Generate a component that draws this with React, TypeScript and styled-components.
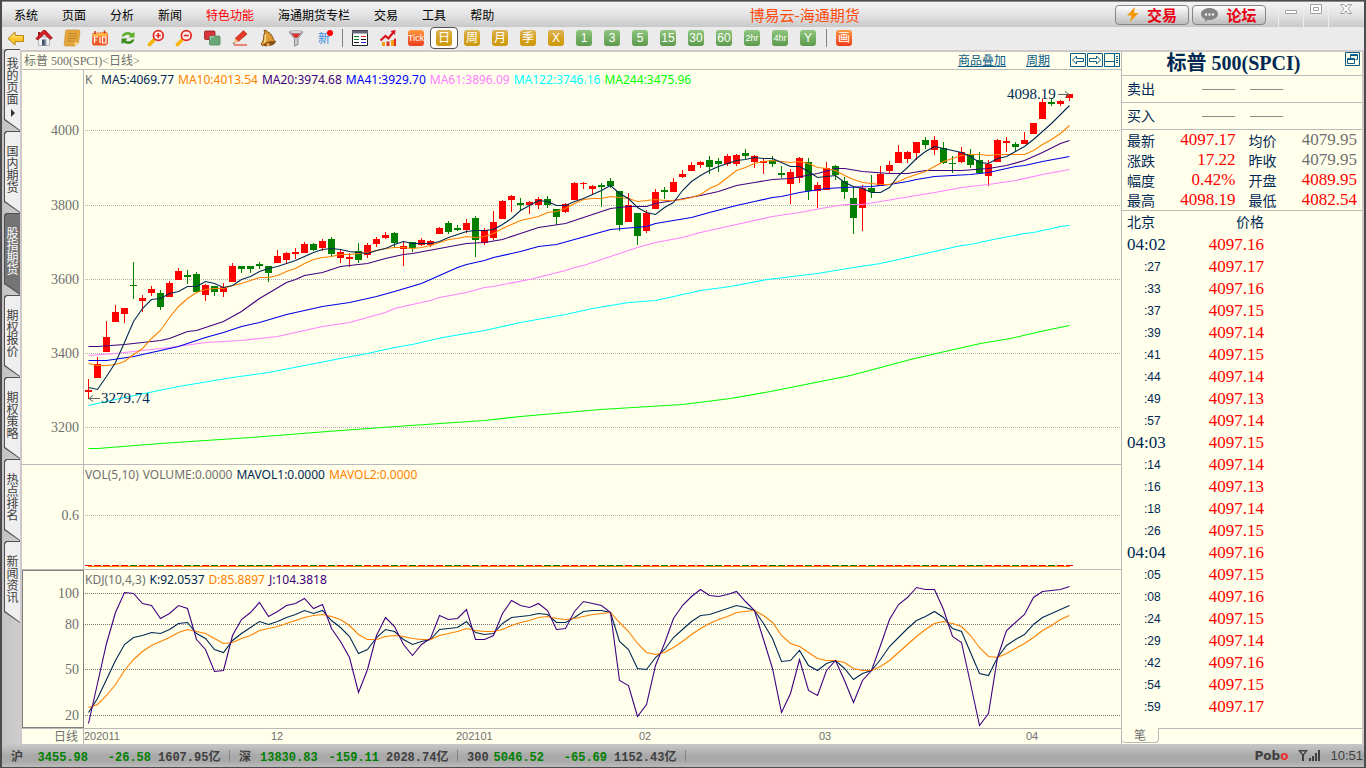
import React from "react";
import styled, { createGlobalStyle } from "styled-components";

const CJK = '"Noto Sans CJK SC"';
const SERIF = `"Liberation Serif", ${CJK}, serif`;
const SANS = `"Liberation Sans", ${CJK}, sans-serif`;
const UI = `${CJK}, sans-serif`;
const MONO = `"Liberation Mono", ${CJK}, monospace`;
const LEGEND = `"Noto Sans", ${CJK}, sans-serif`;

const C = {
  paper: "#ffffeb",
  line: "#b9b9b9",
  edge: "#cfc8c8",
  navy: "#002855",
  grey: "#707070",
  red: "#ff0000",
  green: "#008000",
  orange: "#ff8000",
  purple: "#400080",
};

const Global = createGlobalStyle`
  *, *::before, *::after { box-sizing: border-box; }
  body { margin: 0; background: #ebebeb; font-family: ${UI}; font-size: 12px; }
  button { font: inherit; color: inherit; border: 0; padding: 0; background: none; cursor: pointer; }
  a { color: inherit; text-decoration: none; }
  svg { display: block; }
  dl, dd, h1, h2, ul { margin: 0; padding: 0; }
`;

/* ---------- frame ---------- */

const Frame = styled.div`
  min-height: 100vh;
  display: flex;
  flex-direction: column;
  border: 1px solid #4c4a4c;
  border-width: 1px 2px;
  background: #ebebeb;
`;

const MenuBar = styled.header`
  height: 26px;
  display: flex;
  align-items: center;
  padding-right: 2px;
  border-top: 1px solid #8a8a8a;
  background: linear-gradient(#f3f3f3, #e6e6e6 45%, #c9c9c9);
  white-space: nowrap;
`;

const Menu = styled.nav`
  display: flex;
  gap: 24px;
  padding-left: 12px;
`;

const MenuItem = styled.button<{ $hot?: boolean }>`
  line-height: 24px;
  color: ${(p) => (p.$hot ? C.red : "#000")};
`;

const AppTitle = styled.h1`
  flex: 1;
  text-align: center;
  font-size: 15px;
  line-height: 24px;
  font-weight: 400;
  color: #ff4a0a;
`;

const MenuRight = styled.div`
  align-self: stretch;
  display: flex;
  align-items: center;
  gap: 3px;
`;

const PillButton = styled.button`
  width: 74px;
  height: 20px;
  display: flex;
  align-items: center;
  justify-content: center;
  gap: 8px;
  border: 1px solid #858585;
  border-radius: 4px;
  background: linear-gradient(#ffffff, #dedede 50%, #bdbdbd);
  color: #e60012;
  font-size: 15px;
  font-weight: 700;
  line-height: 18px;
`;

const WindowButtons = styled.div`
  display: flex;
  align-self: stretch;
  margin-left: 9px;
`;

const WindowButton = styled.button<{ $wide?: boolean }>`
  width: ${(p) => (p.$wide ? "34px" : "25px")};
  display: flex;
  justify-content: center;
  border-left: 1px solid #ededed;
`;

const Toolbar = styled.div`
  height: 23px;
  display: flex;
  align-items: flex-start;
`;

const Tool = styled.button<{ $active?: boolean }>`
  width: 28px;
  height: 22px;
  display: flex;
  align-items: center;
  justify-content: center;
  border: ${(p) => (p.$active ? "1px solid #505050" : "0")};
  border-radius: 4px;
  background: ${(p) => (p.$active ? "#fff" : "none")};
`;

const ToolDivider = styled.span`
  width: 8px;
  height: 22px;
  padding: 2px 0;
  display: flex;
  justify-content: center;
  &::before {
    content: "";
    width: 1px;
    background: #808080;
  }
`;

type Tone = "gold" | "green" | "red";
const tones: Record<Tone, string> = {
  gold: "linear-gradient(#dcb458, #d4a017 60%, #cb9a10)",
  green: "linear-gradient(#8fc57e, #5c9a4c)",
  red: "linear-gradient(#ff9a3c, #ee3a1c)",
};

const Badge = styled.span<{ $tone: Tone; $small?: boolean }>`
  width: 16px;
  height: 16px;
  border-radius: 3px;
  background: ${(p) => tones[p.$tone]};
  color: #fff;
  font-family: ${SANS};
  font-size: ${(p) => (p.$small ? "9px" : "12px")};
  line-height: 16px;
  text-align: center;
  white-space: nowrap;
`;

const NewBadge = styled.span`
  position: relative;
  color: #3c8cdc;
  font-size: 12px;
  line-height: 16px;
  &::after {
    content: "";
    position: absolute;
    top: 0;
    right: -3px;
    width: 6px;
    height: 6px;
    border-radius: 50%;
    background: ${C.red};
  }
`;

const Body = styled.div`
  flex: 1;
  display: flex;
`;

/* ---------- left rail ---------- */

const Rail = styled.nav`
  width: 18px;
  padding-left: 2px;
  margin-top: -1px;
  background: linear-gradient(90deg, #c2c2c4, #cecece);
`;

const RailTab = styled.button<{ $active?: boolean }>`
  position: relative;
  width: 16px;
  height: 82px;
  display: flex;
  flex-direction: column;
  align-items: center;
  justify-content: center;
  gap: 4px;
  padding-bottom: 6px;
  isolation: isolate;
  color: ${(p) => (p.$active ? "#fff" : "#404040")};
  &::before,
  &::after {
    content: "";
    position: absolute;
    z-index: -1;
  }
  &::before {
    inset: 0;
    background: #505050;
    clip-path: polygon(2px 0, 100% 0, 100% 100%, 0 71px, 0 2px);
  }
  &::after {
    inset: 1px 0 1px 1px;
    background: ${(p) => (p.$active ? "#747474" : "#efefef")};
    clip-path: polygon(2px 0, 100% 0, 100% 100%, 0 69px, 0 2px);
  }
`;

const RailText = styled.span`
  writing-mode: vertical-rl;
  text-orientation: upright;
  font-size: 12px;
  line-height: 14px;
`;

/* ---------- chart column ---------- */

const Workspace = styled.main`
  flex: 1;
  min-width: 0;
  display: flex;
  border: 2px solid ${C.edge};
  border-bottom: 0;
  background: ${C.paper};
`;

const Charts = styled.section`
  flex: 1;
  min-width: 0;
  display: flex;
  flex-direction: column;
`;

const ChartHeader = styled.div`
  height: 18px;
  display: flex;
  align-items: center;
  padding: 0 1px 0 2px;
  border-bottom: 1px solid ${C.line};
  font-family: ${SERIF};
  line-height: 16px;
  white-space: nowrap;
`;

const Instrument = styled.span`
  flex: 1;
  color: ${C.grey};
`;

const HeaderLink = styled.a`
  margin-right: 20px;
  color: #0c5c88;
  text-decoration: underline;
`;

const IconStrip = styled.div`
  display: flex;
  gap: 1px;
  color: #0c5c88;
`;

const IconButton = styled.button`
  width: 16px;
  height: 15px;
  color: #0c5c88;
`;

const Pane = styled.div<{ $height: number; $grow?: boolean }>`
  flex: ${(p) => (p.$grow ? 1 : 0)} 0 ${(p) => p.$height}px;
  display: flex;
  border-bottom: ${(p) => (p.$height > 20 ? `1px solid ${C.line}` : "0")};
`;

const Axis = styled.div<{ $boxed?: boolean }>`
  width: 62px;
  border-right: 1px solid ${C.line};
  outline: ${(p) => (p.$boxed ? "1px solid #808080" : "none")};
  outline-offset: -1px;
  text {
    font-family: ${SERIF};
    font-size: 14px;
    fill: ${C.grey};
    text-anchor: end;
  }
`;

const Plot = styled.div`
  position: relative;
  flex: 1;
  min-width: 0;
`;

const Legend = styled.div`
  position: absolute;
  top: 2px;
  left: 1px;
  display: flex;
  gap: 4px;
  font-family: ${LEGEND};
  font-size: 12px;
  line-height: 16px;
  white-space: nowrap;
`;

const LegendItem = styled.span<{ $color: string; $lead?: boolean }>`
  color: ${(p) => p.$color};
  min-width: ${(p) => (p.$lead ? "12px" : "0")};
`;

const PeriodLabel = styled.div`
  width: 62px;
  padding-right: 5px;
  border-right: 1px solid ${C.line};
  color: ${C.grey};
  text-align: right;
  line-height: 14px;
`;

/* ---------- quote panel ---------- */

const Quote = styled.aside`
  flex: 0 0 241px;
  display: flex;
  flex-direction: column;
  border-left: 1px solid ${C.line};
  color: ${C.navy};
`;

const QuoteTitle = styled.div`
  height: 24px;
  display: flex;
  border-bottom: 1px solid ${C.line};
  padding-right: 1px;
`;

const QuoteName = styled.h2`
  flex: 1;
  font-family: ${SERIF};
  font-size: 20px;
  line-height: 22px;
  font-weight: 700;
  text-align: center;
  white-space: pre;
`;

const OrderRow = styled.div`
  height: 27px;
  display: flex;
  align-items: center;
  padding: 0 0 2px 5px;
  border-bottom: 1px solid ${C.line};
  font-size: 14px;
  line-height: 20px;
`;

const Dashes = styled.span<{ $first?: boolean }>`
  margin-left: ${(p) => (p.$first ? "47px" : "15px")};
  font-family: ${SANS};
  font-size: 11px;
  color: ${C.grey};
`;

const Stats = styled.dl`
  display: grid;
  grid-template-columns: 28px 1fr 41px 1fr;
  grid-auto-rows: 20px;
  padding: 0 5px;
  border-bottom: 1px solid ${C.line};
  line-height: 20px;
`;

const StatName = styled.dt`
  font-size: 14px;
  text-align: right;
`;

const StatValue = styled.dd<{ $flat?: boolean }>`
  font-family: ${SERIF};
  font-size: 17px;
  text-align: right;
  color: ${(p) => (p.$flat ? C.grey : C.red)};
`;

const Ticks = styled.table`
  width: 142px;
  border-collapse: collapse;
  table-layout: fixed;
`;

const TickHead = styled.th<{ $right?: boolean }>`
  height: 23px;
  padding: 0 0 0 ${(p) => (p.$right ? "0" : "5px")};
  font-size: 14px;
  line-height: 20px;
  font-weight: 400;
  vertical-align: top;
  text-align: ${(p) => (p.$right ? "right" : "left")};
`;

const TickTime = styled.td<{ $minor?: boolean }>`
  height: 22px;
  padding: 0 0 0 ${(p) => (p.$minor ? "22px" : "5px")};
  font-family: ${(p) => (p.$minor ? SANS : SERIF)};
  font-size: ${(p) => (p.$minor ? "12px" : "17px")};
  line-height: 20px;
`;

const TickPrice = styled.td`
  padding: 0;
  font-family: ${SERIF};
  font-size: 17px;
  line-height: 20px;
  text-align: right;
  color: ${C.red};
`;

const QuoteFoot = styled.div`
  display: flex;
  height: 16px;
  margin-top: auto;
`;

const FootTab = styled.button`
  width: 37px;
  height: 15px;
  border: 1px solid ${C.line};
  border-top: 0;
  border-left: 0;
  border-radius: 0 0 4px 4px;
  color: ${C.grey};
  line-height: 14px;
`;

const FootRest = styled.div`
  flex: 1;
  border-top: 1px solid ${C.line};
`;

/* ---------- status bar ---------- */

const Status = styled.footer`
  height: 23px;
  display: flex;
  align-items: center;
  padding: 0 1px 0 9px;
  background: linear-gradient(#c8c8c8, #a9a9a9 50%, #a9a9a9 75%, #bcbcbc);
  font-family: ${MONO};
  font-size: 12px;
  font-weight: 700;
  color: #404040;
  white-space: nowrap;
`;

const IndexGroup = styled.div`
  width: 228px;
  display: flex;
  align-items: baseline;
`;

const IndexName = styled.span`
  width: 21px;
`;

const IndexValue = styled.span<{ $width: number }>`
  width: ${(p) => p.$width}px;
  text-align: right;
  color: ${C.green};
`;

const Turnover = styled.span`
  width: 78px;
  padding-left: 7px;
`;

const StatusDivider = styled.span`
  align-self: center;
  width: 1px;
  height: 11px;
  background: #808080;
`;

const StatusRight = styled.div`
  margin-left: auto;
  display: flex;
  align-items: center;
  gap: 10px;
  font-family: ${SANS};
  font-size: 13px;
  font-weight: 400;
`;

const Brand = styled.span`
  font-family: "DejaVu Sans", sans-serif;
  font-size: 12px;
  font-weight: 700;
  em {
    font-style: normal;
    color: #f03030;
  }
`;

/* ---------- data ---------- */

type Candle = ["r" | "g", number, number, number, number];

/* direction, high, body top, body bottom, low */
const candles: Candle[] = [
  ["r", 379, 390, 392, 399], ["r", 357, 364, 378, 378], ["r", 321, 337, 352, 352], ["r", 305, 312, 322, 322],
  ["r", 308, 308, 314, 323], ["g", 262, 285, 286, 299], ["r", 295, 298, 301, 312], ["r", 286, 289, 293, 296],
  ["g", 290, 293, 307, 310], ["r", 281, 283, 297, 297], ["r", 268, 271, 280, 280], ["g", 270, 275, 277, 284],
  ["g", 272, 274, 292, 292], ["r", 284, 285, 295, 301], ["g", 286, 286, 292, 296], ["r", 283, 287, 292, 297],
  ["r", 263, 266, 282, 282], ["g", 266, 266, 269, 273], ["g", 266, 266, 269, 273], ["g", 262, 264, 266, 269],
  ["g", 266, 266, 273, 282], ["r", 250, 256, 263, 263], ["r", 252, 253, 260, 264], ["r", 248, 252, 254, 259],
  ["r", 242, 244, 253, 253], ["g", 243, 244, 250, 251], ["r", 239, 241, 248, 251], ["g", 237, 239, 254, 257],
  ["r", 250, 252, 258, 263], ["r", 253, 257, 259, 267], ["g", 243, 251, 260, 263], ["r", 243, 245, 255, 258],
  ["r", 237, 239, 244, 247], ["r", 232, 235, 238, 239], ["g", 232, 233, 243, 247], ["r", 242, 246, 249, 266],
  ["g", 242, 242, 248, 252], ["r", 238, 240, 245, 246], ["r", 240, 241, 245, 247], ["r", 227, 228, 234, 234],
  ["g", 221, 223, 232, 234], ["g", 225, 228, 230, 231], ["r", 219, 223, 230, 233], ["g", 216, 218, 240, 257],
  ["r", 228, 230, 243, 245], ["r", 211, 222, 238, 240], ["r", 200, 201, 219, 219], ["r", 195, 196, 200, 212],
  ["g", 198, 203, 205, 211], ["r", 201, 202, 205, 214], ["r", 197, 199, 205, 209], ["g", 196, 199, 205, 208],
  ["g", 209, 209, 217, 225], ["r", 203, 204, 212, 213], ["r", 182, 183, 200, 200], ["r", 182, 183, 184, 189],
  ["r", 185, 186, 189, 195], ["g", 183, 185, 187, 207], ["g", 178, 181, 186, 188], ["g", 191, 191, 225, 231],
  ["r", 193, 205, 222, 222], ["g", 213, 213, 236, 245], ["r", 210, 213, 231, 233], ["r", 189, 192, 209, 209],
  ["g", 187, 190, 192, 199], ["r", 178, 182, 192, 192], ["r", 170, 174, 177, 178], ["r", 162, 165, 171, 171],
  ["r", 161, 162, 165, 168], ["g", 156, 160, 167, 174], ["g", 158, 161, 164, 172], ["r", 154, 156, 164, 166],
  ["r", 154, 155, 164, 166], ["g", 149, 153, 156, 160], ["r", 155, 156, 162, 168], ["r", 159, 161, 163, 174],
  ["g", 156, 160, 164, 167], ["g", 166, 173, 175, 178], ["r", 169, 172, 184, 204], ["r", 157, 158, 178, 183],
  ["g", 158, 162, 191, 200], ["r", 182, 185, 191, 208], ["r", 162, 168, 190, 190], ["g", 165, 166, 175, 180],
  ["g", 177, 181, 192, 199], ["g", 187, 198, 218, 234], ["r", 185, 188, 208, 231], ["g", 175, 188, 192, 198],
  ["r", 166, 174, 186, 186], ["r", 161, 165, 171, 173], ["r", 145, 152, 163, 163], ["r", 151, 152, 159, 163],
  ["r", 142, 142, 153, 160], ["g", 137, 140, 145, 149], ["r", 136, 140, 150, 155], ["g", 142, 148, 163, 164],
  ["g", 156, 163, 164, 173], ["r", 147, 152, 162, 163], ["g", 149, 154, 165, 168], ["g", 152, 160, 173, 174],
  ["r", 160, 164, 176, 186], ["r", 139, 140, 162, 162], ["r", 137, 141, 143, 152], ["g", 142, 144, 147, 152],
  ["r", 132, 140, 144, 144], ["r", 123, 123, 134, 134], ["r", 99, 102, 119, 119], ["g", 98, 102, 104, 106],
  ["r", 100, 101, 104, 106], ["r", 94, 94, 98, 101],
];

const ma5 = [
  387, 389, 376, 362, 342, 321, 308, 299, 298, 293, 291, 286, 286, 281, 283, 287, 285, 279, 276, 271, 268, 266, 263,
  260, 256, 252, 249, 248, 249, 251, 252, 253, 250, 248, 244, 241, 243, 243, 243, 241, 237, 234, 231, 230, 230, 229,
  224, 218, 210, 205, 200, 201, 205, 205, 201, 198, 194, 190, 185, 193, 198, 207, 212, 214, 207, 202, 190, 181, 175,
  170, 166, 163, 160, 159, 157, 158, 158, 162, 166, 166, 171, 177, 176, 175, 182, 186, 188, 192, 192, 187, 175, 167,
  158, 151, 146, 148, 150, 152, 156, 162, 163, 158, 156, 151, 146, 139, 131, 123, 114, 105,
];

const ma10 = [
  363, 365, 365, 364, 361, 354, 348, 338, 330, 317, 306, 298, 292, 289, 288, 288, 285, 283, 280, 277, 277, 275, 271,
  268, 263, 259, 257, 256, 254, 254, 253, 252, 250, 248, 247, 247, 248, 247, 245, 242, 239, 238, 236, 237, 236, 233,
  228, 224, 220, 218, 216, 212, 211, 208, 203, 199, 198, 198, 196, 197, 198, 201, 200, 199, 200, 200, 199, 197, 194,
  188, 184, 177, 170, 167, 163, 161, 160, 161, 162, 161, 163, 167, 168, 170, 175, 179, 182, 183, 184, 184, 181, 177,
  174, 171, 166, 161, 158, 155, 154, 154, 155, 154, 154, 154, 154, 150, 144, 139, 133, 125,
];

const ma20 =
  "88,346 97,346 124,344 142,342 160,340 169,338 187,331 196,330 214,324 223,321 241,311 259,298 286,282 295,279 304,275 322,272 340,266 367,263 385,258 394,256 403,254 412,253 439,248 466,243 484,242 502,239 520,233 538,227 565,223 583,217 601,211 610,208 628,206 646,206 655,203 673,200 700,195 718,191 736,185 754,182 772,179 790,178 817,173 835,168 844,168 862,171 889,173 907,173 925,170 961,170 988,168 1006,165 1024,160 1042,152 1060,143 1069,140";
const ma41 =
  "88,360 106,360 133,356 151,352 178,346 205,337 223,332 241,326 259,322 286,314 322,306 349,302 376,296 394,291 421,283 439,275 457,267 466,264 484,260 493,257 520,251 538,246 556,244 574,239 592,234 610,229 646,226 655,223 673,220 691,217 709,212 736,205 754,201 772,197 781,196 799,192 826,188 844,187 871,186 889,184 907,181 916,179 934,176 952,175 970,174 988,172 1015,166 1024,165 1042,161 1069,156";
const ma61 =
  "88,355 115,353 142,350 169,347 205,342 241,340 259,338 277,336 295,332 322,326 349,322 367,317 385,312 394,308 430,300 439,297 466,292 484,287 493,286 529,279 565,270 574,267 583,265 610,256 637,247 655,242 682,237 700,232 736,224 772,216 799,212 826,207 844,204 862,204 880,201 898,198 934,192 961,187 988,184 1015,180 1042,174 1069,169";
const ma122 =
  "88,405 124,397 178,386 232,377 268,372 304,365 340,358 367,353 394,347 412,344 442,337 484,330 493,328 520,322 565,314 592,308 628,302 655,300 700,290 730,286 767,279 817,273 853,267 880,263 925,253 961,245 970,244 988,240 1024,233 1033,232 1060,226 1069,225";
const ma244 =
  "88,448 97,448 160,443 250,437 340,430 410,425 484,420 520,416 600,409 682,404 730,398 770,391 820,381 850,375 880,367 910,359 940,352 980,343 1010,338 1040,331 1069,325";

const kLine = [
  712, 698, 679, 660, 644, 637, 635, 632, 633, 629, 623, 622, 633, 638, 649, 652, 640, 633, 627, 621, 624, 621, 617,
  614, 610, 613, 610, 620, 627, 636, 653, 649, 637, 629, 631, 639, 644, 641, 639, 629, 628, 627, 621, 632, 634, 633,
  623, 617, 616, 615, 613, 614, 622, 622, 617, 611, 610, 610, 612, 641, 649, 668, 669, 657, 649, 637, 629, 621, 615,
  614, 611, 608, 605, 607, 610, 623, 638, 661, 660, 650, 665, 670, 663, 660, 668, 679, 673, 670, 659, 646, 637, 628,
  620, 616, 611, 617, 628, 631, 652, 673, 675, 657, 645, 639, 634, 624, 617, 613, 609, 605,
];

const dLine = [
  707, 704, 695, 684, 670, 659, 651, 645, 641, 637, 632, 629, 631, 633, 638, 643, 642, 638, 635, 630, 628, 626, 623,
  620, 617, 615, 614, 616, 619, 625, 634, 639, 639, 636, 635, 636, 638, 639, 639, 635, 633, 631, 628, 630, 631, 631,
  629, 625, 622, 620, 617, 616, 618, 619, 618, 616, 614, 613, 612, 622, 631, 643, 652, 654, 652, 647, 641, 634, 628,
  623, 619, 616, 612, 611, 610, 615, 622, 635, 643, 646, 652, 658, 660, 660, 662, 668, 670, 670, 666, 660, 652, 644,
  636, 629, 623, 621, 623, 626, 635, 647, 656, 657, 653, 648, 643, 637, 630, 625, 619, 615,
];

const jLine = [
  723, 683, 643, 612, 592, 593, 603, 605, 618, 613, 605, 608, 639, 649, 671, 670, 635, 619, 612, 602, 616, 611, 605,
  603, 598, 608, 604, 628, 641, 657, 692, 669, 635, 617, 626, 644, 655, 644, 638, 615, 619, 618, 609, 639, 639, 635,
  613, 600, 605, 607, 603, 610, 629, 628, 611, 601, 603, 605, 612, 680, 685, 716, 704, 665, 643, 618, 605, 596, 589,
  595, 596, 594, 591, 601, 610, 639, 668, 712, 693, 659, 690, 695, 670, 660, 680, 702, 680, 670, 645, 619, 604, 597,
  587, 589, 589, 609, 636, 642, 683, 725, 713, 657, 630, 622, 614, 597, 591, 590, 589, 586,
];

const STEP = 9;
const FIRST = 88;
const series = (ys: number[]) => ys.map((y, i) => `${FIRST + i * STEP},${y}`).join(" ");

const ticks: [string, string][] = [
  ["04:02", "4097.16"], [":27", "4097.17"], [":33", "4097.16"], [":37", "4097.15"], [":39", "4097.14"],
  [":41", "4097.15"], [":44", "4097.14"], [":49", "4097.13"], [":57", "4097.14"], ["04:03", "4097.15"],
  [":14", "4097.14"], [":16", "4097.13"], [":18", "4097.14"], [":26", "4097.15"], ["04:04", "4097.16"],
  [":05", "4097.15"], [":08", "4097.16"], [":24", "4097.15"], [":29", "4097.14"], [":42", "4097.16"],
  [":54", "4097.15"], [":59", "4097.17"],
];

const stats: [string, string, boolean][] = [
  ["最新", "4097.17", false], ["均价", "4079.95", true],
  ["涨跌", "17.22", false], ["昨收", "4079.95", true],
  ["幅度", "0.42%", false], ["开盘", "4089.95", false],
  ["最高", "4098.19", false], ["最低", "4082.54", false],
];

const railTabs = ["我的页面", "国内期货", "股指期货", "期权报价", "期权策略", "热点排名", "新闻资讯"];
const menus = ["系统", "页面", "分析", "新闻", "特色功能", "海通期货专栏", "交易", "工具", "帮助"];
const indices = [
  ["沪", "3455.98", "-26.58", "1607.95亿"],
  ["深", "13830.83", "-159.11", "2028.74亿"],
  ["300", "5046.52", "-65.69", "1152.43亿"],
];

/* ---------- toolbar icons ---------- */

const Ico = ({ children }: { children: React.ReactNode }) => (
  <svg width="18" height="18" viewBox="0 0 18 18" aria-hidden="true">
    {children}
  </svg>
);

const BackIcon = () => (
  <Ico>
    <path d="M1 9.5 8 3v3.500h8.500v6H8V16Z" fill="#fdc52c" stroke="#b98410" strokeLinejoin="round" />
    <path d="M3.500 9 7 5.500V8h8" fill="none" stroke="#ffe98c" />
  </Ico>
);
const HomeIcon = () => (
  <Ico>
    <path d="M3.500 8h11v8.500h-11Z" fill="#eef0f4" stroke="#9aa0aa" strokeWidth=".7" />
    <path d="M3 3h2.500v5H3z" fill="#a01818" />
    <path d="M.8 9.800 8 1.500h2.500L17.400 9l-2.300 1.500L9.300 5 3 10.800Z" fill="#d81e24" stroke="#8c1014" strokeWidth=".7" />
    <path d="M7 10.500h4.200v6H7z" fill="#44506a" />
    <path d="M9.500 11h1.400v5H9.500z" fill="#8d96a8" />
  </Ico>
);
const NoteIcon = () => (
  <Ico>
    <path d="M4 1h11.500c1 0 1.500.8 1.500 1.800L15.500 14 12 17H3c-1.300 0-2-.8-1.800-2L2.500 2.500C2.600 1.500 3 1 4 1Z" fill="#e2a63a" stroke="#c98f2c" strokeWidth=".6" />
    <path d="M5 4.500h9M4.800 7h9M4.500 9.500h9M4 12h6" stroke="#bf842a" />
    <path d="M15.500 13.500 12 17l-.5-3.200Z" fill="#ffe6a4" />
  </Ico>
);
const F10Icon = () => (
  <Ico>
    <path d="M1.500 4 15.500 3l1.500 2v9.500L15 16.500H2.500L1 15Z" fill="#ee5a24" />
    <path d="M2 4.500 15.500 3.500l1 1.500-.2 2.500H1.600Z" fill="#ffb347" />
    <path d="M4 2v3M13.500 1.500v3" stroke="#c03818" strokeWidth="1.500" />
    <path d="M3.500 14V8H7M3.500 11H6M9 8v6M11.500 8H15v6h-3.500Z" fill="none" stroke="#fff" strokeWidth="1.200" />
  </Ico>
);
const RefreshIcon = () => (
  <Ico>
    <path d="M2.500 7.500C4 2.500 10 2 13 4.500L15.500 3v5.500H9.500L11.300 6.500C9 5 6 5.500 5 7.500Z" fill="#5fae2c" />
    <path d="M15.500 10.500C14 15.500 8 16 5 13.500L2.500 15V9.500h6L6.700 11.500C9 13 12 12.500 13 10.500Z" fill="#3c8c1c" />
  </Ico>
);
const ZoomIcon = ({ plus }: { plus?: boolean }) => (
  <Ico>
    <path d="m2.500 15.500 4-4" stroke="#f4b400" strokeWidth="3.600" strokeLinecap="round" />
    <circle cx="11.300" cy="6.500" r="4.900" fill="#fff0f0" stroke="#e5261e" strokeWidth="1.700" />
    <path d={plus ? "M8.800 6.500h5M11.300 4v5" : "M8.800 6.500h5"} stroke="#e5261e" strokeWidth="1.600" />
  </Ico>
);
const LayersIcon = () => (
  <Ico>
    <rect x="1.500" y="2" width="10.500" height="8.500" rx="1" fill="#d9343a" stroke="#8e1f24" strokeWidth=".8" />
    <rect x="6.500" y="7" width="10.500" height="9" rx="1" fill="#6aa878" stroke="#4b875a" strokeWidth=".8" />
    <path d="M7.500 10.500V7.800h4" stroke="#b4d8bc" fill="none" />
  </Ico>
);
const PencilIcon = () => (
  <Ico>
    <path d="M12.500 1.500 16 5 7.500 12.500 4 9.500Z" fill="#e63a28" stroke="#a82418" strokeWidth=".6" />
    <path d="m4 9.500 3.500 3L2 15.300Z" fill="#f2c489" />
    <path d="M2.800 13.500 2 15.300l1.900-.8Z" fill="#333" />
    <path d="M3 16h13" stroke="#e63a28" strokeWidth="1.200" />
  </Ico>
);
const BellIcon = () => (
  <Ico>
    <path d="M5 1.500c2-1 3.500 1 3.700 1.500C14 5 13 10 16.800 12.800L3.200 16.500C2 15.500 2 14 3.500 13 5.500 10.500 4 6 5.800 3.500Z" fill="#dd9a34" stroke="#7c4a12" />
    <path d="M6.500 5.500C6 8.500 7 11 5.500 13.500" stroke="#fbdf96" strokeWidth="1.500" fill="none" />
    <ellipse cx="10.500" cy="14.700" rx="6" ry="2.200" transform="rotate(-14 10.500 14.700)" fill="#8a4d12" />
    <circle cx="9" cy="15.500" r="1.500" fill="#e6b04c" />
  </Ico>
);
const FunnelIcon = () => (
  <Ico>
    <path d="M2 3h14l-5 6.500v6L7.500 17V9.500Z" fill="#c9cdd2" stroke="#7c8086" strokeWidth=".9" />
    <path d="M4 4h10l-4 5H8Z" fill="#dd3030" />
    <ellipse cx="9" cy="3" rx="7" ry="1.300" fill="#e4e6ea" stroke="#8a8e94" strokeWidth=".7" />
  </Ico>
);
const GridIcon = () => (
  <Ico>
    <path d="M1.500 1.500h15v15h-15z" fill="#fff" stroke="#222" />
    <path d="M1 3h16" stroke="#667" strokeWidth="3" />
    <path d="M3 7.500h5" stroke="#0a8a2a" />
    <path d="M10 7.500h5" stroke="#d22" />
    <path d="M3 10.500h5" stroke="#0a8a2a" />
    <path d="M10 10.500h5M3 13.500h5" stroke="#111" />
    <path d="M10 13.500h5" stroke="#22c" />
  </Ico>
);
const TrendIcon = () => (
  <Ico>
    <path d="M3 13h3v4H3zM12 11h3v6h-3z" fill="#f0a010" />
    <path d="M7.500 12.500h3V17h-3z" fill="#e03020" />
    <path d="m1.500 11.500 5-4.500 3 2.500L14.500 3" fill="none" stroke="#d8141c" strokeWidth="2.200" />
    <path d="m11.500 2 5-1-.5 5Z" fill="#d8141c" />
    <path d="M15 9.500h2V17h-2z" fill="#e03020" />
  </Ico>
);

const goldPeriods = ["周", "月", "季", "X"];
const greenPeriods = ["1", "3", "5", "15", "30", "60", "2hr", "4hr", "Y"];

const ToolbarRow = () => (
  <Toolbar role="toolbar" aria-label="工具栏">
    <Tool aria-label="后退"><BackIcon /></Tool>
    <Tool aria-label="首页"><HomeIcon /></Tool>
    <Tool aria-label="便签"><NoteIcon /></Tool>
    <Tool aria-label="F10"><F10Icon /></Tool>
    <Tool aria-label="刷新"><RefreshIcon /></Tool>
    <Tool aria-label="放大"><ZoomIcon plus /></Tool>
    <Tool aria-label="缩小"><ZoomIcon /></Tool>
    <Tool aria-label="叠加"><LayersIcon /></Tool>
    <Tool aria-label="画笔"><PencilIcon /></Tool>
    <Tool aria-label="预警"><BellIcon /></Tool>
    <Tool aria-label="筛选"><FunnelIcon /></Tool>
    <Tool><NewBadge>新</NewBadge></Tool>
    <ToolDivider />
    <Tool aria-label="报价"><GridIcon /></Tool>
    <Tool aria-label="走势"><TrendIcon /></Tool>
    <Tool><Badge $tone="red" $small>Tick</Badge></Tool>
    <Tool $active><Badge $tone="gold">日</Badge></Tool>
    {goldPeriods.map((p) => (
      <Tool key={p}><Badge $tone="gold">{p}</Badge></Tool>
    ))}
    {greenPeriods.map((p) => (
      <Tool key={p}><Badge $tone="green" $small={p.length > 2}>{p}</Badge></Tool>
    ))}
    <ToolDivider />
    <Tool><Badge $tone="red">画</Badge></Tool>
  </Toolbar>
);

/* ---------- charts ---------- */

const GridLine = ({ y, dark }: { y: number; dark?: boolean }) => (
  <line x1="1" x2="100%" y1={y + 0.5} y2={y + 0.5} stroke={dark ? "#787878" : "#b0b0b0"} strokeDasharray="1 1" shapeRendering="crispEdges" />
);

const Curve = ({ points, color }: { points: string; color: string }) => (
  <polyline points={points} transform="translate(.5 .5)" fill="none" stroke={color} strokeWidth="1.100" />
);

const tone = (d: "r" | "g") => (d === "r" ? C.red : C.green);

const PricePlot = () => (
  <svg width="100%" height="394" role="img" aria-label="日线K线图">
    {[60, 135, 209, 283, 357].map((y) => <GridLine key={y} y={y} />)}
    <g transform="translate(-84 -70)">
      <g shapeRendering="crispEdges">
        {candles.map(([d, high, top, bottom, low], i) => (
          <g key={i} fill={tone(d)}>
            <rect x={FIRST + i * STEP} y={high} width="1" height={low - high} />
            <rect x={FIRST - 3 + i * STEP} y={top} width="7" height={bottom - top} />
          </g>
        ))}
      </g>
      <Curve points={ma244} color="#00ff00" />
      <Curve points={ma122} color="#00ffff" />
      <Curve points={ma61} color="#ff80ff" />
      <Curve points={ma41} color="#0000e8" />
      <Curve points={ma20} color={C.purple} />
      <Curve points={series(ma10)} color={C.orange} />
      <Curve points={series(ma5)} color={C.navy} />
      <g fill={C.navy} fontFamily={SERIF} fontSize="15">
        <text x="1007" y="99">4098.19</text>
        <text x="101" y="403">3279.74</text>
      </g>
      <g stroke="#606060" fill="none">
        <path d="M1058 94.500h10m-3-3 4 3-4 3" />
        <path d="M100 398.500H90m3-3-4 3 4 3" />
      </g>
    </g>
  </svg>
);

const VolumePlot = () => (
  <svg width="100%" height="104" role="img" aria-label="成交量">
    <GridLine y={50} />
    <g transform="translate(-84 -465)" shapeRendering="crispEdges">
      {candles.map(([d], i) => (
        <rect key={i} x={FIRST - 3 + i * STEP} y="565" width="7" height="1" fill={tone(d)} />
      ))}
      <rect x="88" y="566" width="982" height="1" fill={C.orange} />
    </g>
  </svg>
);

const KdjPlot = () => (
  <svg width="100%" height="158" role="img" aria-label="KDJ">
    {[23, 54, 99, 145].map((y) => <GridLine key={y} y={y} dark />)}
    <g transform="translate(-84 -570)">
      <Curve points={series(kLine)} color={C.navy} />
      <Curve points={series(dLine)} color={C.orange} />
      <Curve points={series(jLine)} color={C.purple} />
    </g>
  </svg>
);

const AxisLabels = ({ height, marks }: { height: number; marks: [string, number][] }) => (
  <svg width="61" height={height}>
    {marks.map(([label, y]) => <text key={label} x="57" y={y}>{label}</text>)}
  </svg>
);

const months: [string, number][] = [["202011", 0], ["12", 187], ["202101", 372], ["02", 555], ["03", 735], ["04", 942]];

const ChartColumn = () => (
  <Charts>
    <ChartHeader>
      <Instrument>标普 500(SPCI)&lt;日线&gt;</Instrument>
      <HeaderLink href="#overlay">商品叠加</HeaderLink>
      <HeaderLink href="#period">周期</HeaderLink>
      <IconStrip>
        <IconButton aria-label="左移">
          <svg width="16" height="15" fill="none" stroke="currentColor">
            <path d="M.5.500h15v13H.5zM2.500 7l4-4v2.500h7v3h-7V11Z" />
          </svg>
        </IconButton>
        <IconButton aria-label="右移">
          <svg width="16" height="15" fill="none" stroke="currentColor">
            <path d="M.5.500h15v13H.5zM13.500 7l-4-4v2.500h-7v3h7V11Z" />
          </svg>
        </IconButton>
        <IconButton aria-label="布局">
          <svg width="16" height="15" fill="none" stroke="currentColor">
            <path d="M.5.500h15v13H.5zM1 8.500h9M10.500 1v12M12 3.500h2M12 5.500h2M12 7.500h2M12 9.500h2" />
          </svg>
        </IconButton>
      </IconStrip>
    </ChartHeader>
    <Pane $height={395} $grow>
      <Axis>
        <AxisLabels height={394} marks={[["4000", 65], ["3800", 140], ["3600", 214], ["3400", 288], ["3200", 362]]} />
      </Axis>
      <Plot>
        <PricePlot />
        <Legend>
          <LegendItem $color={C.grey} $lead>K</LegendItem>
          <LegendItem $color={C.navy}>MA5:4069.77</LegendItem>
          <LegendItem $color={C.orange}>MA10:4013.54</LegendItem>
          <LegendItem $color={C.purple}>MA20:3974.68</LegendItem>
          <LegendItem $color="#0000ff">MA41:3929.70</LegendItem>
          <LegendItem $color="#ff80ff">MA61:3896.09</LegendItem>
          <LegendItem $color="#00ffff">MA122:3746.16</LegendItem>
          <LegendItem $color="#00ff00">MA244:3475.96</LegendItem>
        </Legend>
      </Plot>
    </Pane>
    <Pane $height={105}>
      <Axis>
        <AxisLabels height={104} marks={[["0.6", 55]]} />
      </Axis>
      <Plot>
        <VolumePlot />
        <Legend>
          <LegendItem $color={C.grey}>VOL(5,10)</LegendItem>
          <LegendItem $color={C.grey}>VOLUME:0.0000</LegendItem>
          <LegendItem $color={C.navy}>MAVOL1:0.0000</LegendItem>
          <LegendItem $color={C.orange}>MAVOL2:0.0000</LegendItem>
        </Legend>
      </Plot>
    </Pane>
    <Pane $height={159}>
      <Axis $boxed>
        <AxisLabels height={158} marks={[["100", 28], ["80", 59], ["50", 104], ["20", 150]]} />
      </Axis>
      <Plot>
        <KdjPlot />
        <Legend>
          <LegendItem $color={C.grey}>KDJ(10,4,3)</LegendItem>
          <LegendItem $color={C.navy}>K:92.0537</LegendItem>
          <LegendItem $color={C.orange}>D:85.8897</LegendItem>
          <LegendItem $color={C.purple}>J:104.3818</LegendItem>
        </Legend>
      </Plot>
    </Pane>
    <Pane $height={15}>
      <PeriodLabel>日线</PeriodLabel>
      <Plot>
        <svg width="100%" height="15" fontFamily={SANS} fontSize="11" fill={C.grey}>
          {months.map(([m, x]) => <text key={m} x={x} y="11">{m}</text>)}
        </svg>
      </Plot>
    </Pane>
  </Charts>
);

const QuotePanel = () => (
  <Quote>
    <QuoteTitle>
      <QuoteName>标普 500(SPCI)</QuoteName>
      <IconButton aria-label="切换窗口">
        <svg width="16" height="15" fill="none" stroke="currentColor">
          <path d="M.5.500h14v13H.5zM5.500 6.500v-4h7v5h-2M2.500 6.500h7v5h-7zM5.500 3.500h7M2.500 7.500h7" />
        </svg>
      </IconButton>
    </QuoteTitle>
    <OrderRow>卖出<Dashes $first>———</Dashes><Dashes>———</Dashes></OrderRow>
    <OrderRow>买入<Dashes $first>———</Dashes><Dashes>———</Dashes></OrderRow>
    <Stats>
      {stats.map(([name, value, flat]) => (
        <React.Fragment key={name}>
          <StatName>{name}</StatName>
          <StatValue $flat={flat}>{value}</StatValue>
        </React.Fragment>
      ))}
    </Stats>
    <Ticks>
      <thead>
        <tr>
          <TickHead scope="col">北京</TickHead>
          <TickHead scope="col" $right>价格</TickHead>
        </tr>
      </thead>
      <tbody>
        {ticks.map(([time, price]) => (
          <tr key={time}>
            <TickTime $minor={time.startsWith(":")}>{time}</TickTime>
            <TickPrice>{price}</TickPrice>
          </tr>
        ))}
      </tbody>
    </Ticks>
    <QuoteFoot>
      <FootTab>笔</FootTab>
      <FootRest />
    </QuoteFoot>
  </Quote>
);

export default function App() {
  return (
    <Frame>
      <Global />
      <MenuBar>
        <Menu>
          {menus.map((m) => <MenuItem key={m} $hot={m === "特色功能"}>{m}</MenuItem>)}
        </Menu>
        <AppTitle>博易云-海通期货</AppTitle>
        <MenuRight>
          <PillButton>
            <svg width="12" height="15" viewBox="0 0 12 15">
              <path d="M8 0 0 8.500h4.500L3 15l8.500-9H7Z" fill="#f39800" />
            </svg>
            交易
          </PillButton>
          <PillButton>
            <svg width="17" height="14" viewBox="0 0 17 14">
              <path d="M8.500 0C13 0 17 2.500 17 6s-4 6-8.500 6c-.8 0-1.500 0-2 0L4 14l.3-2.800C1.500 10.200 0 8.300 0 6c0-3.500 4-6 8.500-6Z" fill="#858585" />
              <path d="M4 5.500h2v2H4zM7.500 5.500h2v2h-2zM11 5.500h2v2h-2z" fill="#fff" />
            </svg>
            论坛
          </PillButton>
          <WindowButtons>
            <WindowButton aria-label="最小化">
              <svg width="14" height="13" fill="#fff" stroke="#a0a0a0"><path d="M1.500 8.500h11v3h-11z" /></svg>
            </WindowButton>
            <WindowButton aria-label="最大化">
              <svg width="14" height="13" fill="#fff" stroke="#a0a0a0"><path d="M1.500 2.500h11v9h-11zM4.500 5.500h5v3h-5z" /></svg>
            </WindowButton>
            <WindowButton aria-label="关闭" $wide>
              <svg width="14" height="13" fill="#fff" stroke="#a0a0a0">
                <path d="M1.500 2.500h3.500l2 2.500 2-2.500h3.500L9 6.800l3.500 4.700H9L7 8.800 5 11.500H1.500L5 6.800Z" />
              </svg>
            </WindowButton>
          </WindowButtons>
        </MenuRight>
      </MenuBar>
      <ToolbarRow />
      <Body>
        <Rail>
          {railTabs.map((t, i) => (
            <RailTab key={t} $active={i === 2}>
              <RailText>{t}</RailText>
              {i === 0 && <svg width="5" height="8"><path d="M1 0v8l4-4Z" fill="#303030" /></svg>}
            </RailTab>
          ))}
        </Rail>
        <Workspace>
          <ChartColumn />
          <QuotePanel />
        </Workspace>
      </Body>
      <Status>
        {indices.map(([name, price, change, turnover]) => (
          <IndexGroup key={name}>
            <IndexName>{name}</IndexName>
            <IndexValue $width={56}>{price}</IndexValue>
            <IndexValue $width={63}>{change}</IndexValue>
            <Turnover>{turnover}</Turnover>
            <StatusDivider />
          </IndexGroup>
        ))}
        <StatusRight>
          <Brand>Pob<em>o</em></Brand>
          <svg width="22" height="14" fill="#404040">
            <path d="M0 1h10L6 6v6H4V6ZM11 9h2v3h-2zM14 7h2v5h-2zM17 4h2v8h-2zM20 1h2v11h-2z" />
            <path d="M3 2.500h4L5 5Z" fill="#c0c0c0" />
          </svg>
          <span>10:51</span>
        </StatusRight>
      </Status>
    </Frame>
  );
}
